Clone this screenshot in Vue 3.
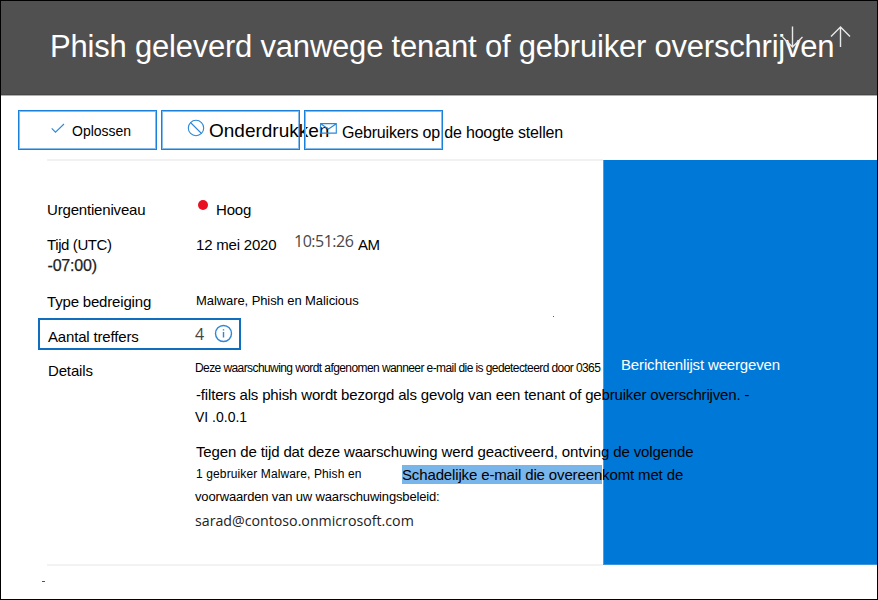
<script setup>
const title = 'Phish geleverd vanwege tenant of gebruiker overschrijven'
</script>

<template>
  <div class="page">
    <header class="header">
      <h1 class="title">{{ title }}</h1>
      <svg class="arrows" width="72" height="24" viewBox="0 0 72 24" fill="none">
        <path d="M13.5 1.5V21.5M3.5 12L13.5 22L23.5 12" />
        <path d="M61.5 22V2M52 11.5L61.5 2L71 11.5" />
      </svg>
    </header>

    <nav class="toolbar">
      <button class="action resolve">
        <svg width="14" height="11" viewBox="0 0 14 11" fill="none"><path d="M.7 5.3L4.5 9.2L13 1" /></svg>
        <span>Oplossen</span>
      </button>
      <button class="action suppress">
        <svg width="18" height="18" viewBox="0 0 18 18" fill="none"><circle cx="9" cy="9" r="7.7" /><path d="M3.5 3.5L14.5 14.5" /></svg>
        <span>Onderdrukken</span>
      </button>
      <button class="action notify">
        <svg width="17" height="11" viewBox="0 0 17 11" fill="none"><path d="M.6.6H16.3V10.1H.6ZM.6.8L8.5 6L16.3.8" /></svg>
        <span>Gebruikers op de hoogte stellen</span>
      </button>
    </nav>

    <main class="content">
      <section class="details">
        <div class="row urgency">
          <div class="label">Urgentieniveau</div>
          <div class="value"><i class="dot"></i><span>Hoog</span></div>
        </div>
        <div class="row time">
          <div class="label"><div class="utc">Tijd (UTC)</div><div class="offset">-07:00)</div></div>
          <div class="value"><span class="date">12 mei 2020</span><span class="clock">10:51:26</span><span class="am">AM</span></div>
        </div>
        <div class="row threat">
          <div class="label">Type bedreiging</div>
          <div class="value">Malware, Phish en Malicious</div>
        </div>
        <div class="row hits">
          <div class="label">Aantal treffers</div>
          <div class="value">
            <span>4</span>
            <svg width="19" height="19" viewBox="0 0 19 19" fill="none"><circle cx="9.5" cy="9.5" r="8" /><path d="M9.5 8V13.5M9.5 5.2V6.6" /></svg>
          </div>
        </div>
        <div class="row info">
          <div class="label">Details</div>
          <div class="value">
            <p class="l1">Deze waarschuwing wordt afgenomen wanneer e-mail die is gedetecteerd door 0365</p>
            <p class="l2">-filters als phish wordt bezorgd als gevolg van een tenant of gebruiker overschrijven. -</p>
            <p class="l3">VI .0.0.1</p>
            <p class="l4">Tegen de tijd dat deze waarschuwing werd geactiveerd, ontving de volgende</p>
            <p class="l5"><span class="count">1 gebruiker Malware, Phish en</span><span class="rest"><mark>Schadelijke e-mail die overeen</mark>komt met de</span></p>
            <p class="l6">voorwaarden van uw waarschuwingsbeleid:</p>
            <p class="l7">sarad@contoso.onmicrosoft.com</p>
          </div>
        </div>
      </section>
      <aside class="panel"><a>Berichtenlijst weergeven</a></aside>
    </main>
    <i class="speck"></i>
    <footer class="foot"><i></i></footer>
  </div>
</template>

<style>
body { margin: 0; }
</style>

<style scoped>
.page {
  position: relative;
  box-sizing: border-box;
  width: 878px;
  height: 600px;
  border: 1px solid #000;
  background: #fff;
  color: #000;
  font: 15px/20px "Liberation Sans", Arial, sans-serif;
  white-space: nowrap;
  overflow: hidden;
}
.header {
  position: relative;
  box-sizing: border-box;
  height: 95px;
  padding: 28px 0 0 49px;
  background: #505050;
  border-bottom: 1px solid #b0b0b0;
  box-shadow: inset 0 -1px #464646;
}
.title { margin: 0; color: #fff; font-size: 31px; font-weight: 400; line-height: 36px; letter-spacing: -0.21px; }
.arrows { position: absolute; left: 778px; top: 24px; stroke: #e8e8e8; stroke-width: 1.4; }
.toolbar { display: flex; gap: 4px; padding: 14px 0 0 17px; height: 63px; box-sizing: border-box; }
.action {
  display: flex;
  align-items: flex-start;
  box-sizing: border-box;
  width: 139px;
  height: 40px;
  padding: 0;
  border: 1px solid #1a80d9;
  box-shadow: inset 0 0 0 1px #84bdee;
  background: none;
  color: #000;
  font: 15px/20px "Liberation Sans", Arial, sans-serif;
}
.action svg { flex: none; stroke: #2b88d8; stroke-width: 1.1; }
.action span { flex: none; }
.resolve svg { margin: 12px 0 0 32px; }
.resolve span { margin: 10px 0 0 7px; font-size: 14px; }
.suppress svg { margin: 8px 0 0 25px; }
.suppress span { margin: 10px 0 0 4px; font-size: 19px; }
.notify svg { margin: 12px 0 0 15px; }
.notify span { margin: 12px 0 0 5px; font-size: 16px; letter-spacing: -0.19px; }

.content { display: flex; height: 407px; margin-left: 46px; }
.details {
  position: relative;
  z-index: 1;
  box-sizing: border-box;
  width: 556px;
  padding-top: 39px;
  border-top: 2px solid #f1f1f1;
  border-bottom: 2px solid #f3f3f3;
}
.row { display: flex; }
.label { flex: none; width: 148px; }
.urgency { height: 35px; }
.urgency .label { letter-spacing: -0.18px; }
.urgency .value { display: flex; letter-spacing: -0.2px; }
.dot { width: 10px; height: 10px; margin: 0 8px 0 3px; border-radius: 50%; background: #e81123; }
.time { height: 57px; }
.utc { letter-spacing: -0.4px; }
.offset { color: #222; font-size: 16px; margin: 1px 0 0 0.5px; letter-spacing: -0.2px; -webkit-text-stroke: 0.25px #222; }
.time .value { display: flex; }
.date { width: 98px; margin-left: 1px; letter-spacing: -0.2px; }
.clock { width: 64px; margin-top: -4px; font-family: "Open Sans", sans-serif; font-size: 16px; letter-spacing: -0.5px; color: #484848; }
.am { letter-spacing: -0.6px; }
.threat { height: 26px; }
.threat .label { letter-spacing: -0.18px; }
.threat .value { margin: -1px 0 0 1px; font-size: 13px; letter-spacing: -0.08px; }
.hits {
  box-sizing: border-box;
  width: 203px;
  height: 32px;
  margin-left: -9px;
  padding: 7px 0 0 8px;
  border: 2px solid #106ebe;
}
.hits .label { width: 147px; letter-spacing: -0.17px; }
.hits .value { display: flex; font-family: "Open Sans", sans-serif; color: #444; }
.hits .value span { margin-top: -3px; width: 19px; font-size: 16px; }
.hits svg { flex: none; margin-top: -3px; stroke: #2b88d8; stroke-width: 1.4; }
.info { padding-top: 11px; }
.info .label { padding-left: 1px; width: 147px; letter-spacing: -0.15px; }
.info p { margin: 0; height: 20px; }
.info .l1 { margin-top: -3px; height: 27px; font-size: 12px; letter-spacing: -0.585px; }
.info .l2 { height: 22px; margin-left: 1px; letter-spacing: -0.165px; }
.info .l3 { height: 35px; font-size: 14px; }
.info .l4 { height: 23px; margin-left: 1px; letter-spacing: -0.13px; }
.info .l5 { display: flex; height: 22px; margin-left: 1px; }
.count { width: 206px; margin-top: -1px; font-size: 12px; letter-spacing: 0.12px; }
.rest { letter-spacing: -0.14px; }
mark { background: #78b5eb; color: inherit; padding: 1px 0; }
.info .l6 { height: 24px; font-size: 13px; letter-spacing: -0.16px; }
.info .l7 { font-family: "Open Sans", sans-serif; font-size: 14.2px; color: #222; }
.panel {
  box-sizing: border-box;
  width: 274px;
  height: 405px;
  margin-top: 1px;
  padding: 195px 0 0 17px;
  background: #0078d7;
  border-left: 1px solid #4a9fe3;
  border-bottom: 1px solid #3c94dd;
}
.panel a { color: #fff; letter-spacing: -0.15px; }
.speck { position: absolute; left: 552px; top: 315px; width: 1px; height: 1px; background: #106ebe; }
.foot { display: flex; padding: 15px 0 0 41px; }
.foot i { width: 3px; height: 1px; background: #c2187e; }
</style>
